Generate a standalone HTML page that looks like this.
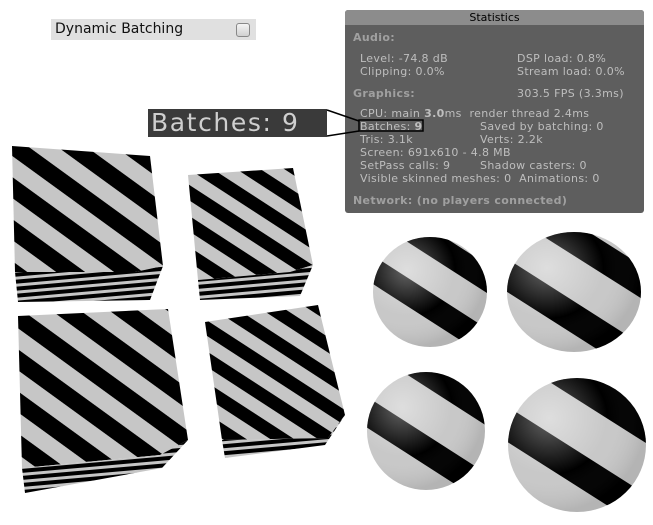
<!DOCTYPE html>
<html><head><meta charset="utf-8"><style>
html,body{margin:0;padding:0;background:#fff;width:653px;height:525px;overflow:hidden;position:relative;font-family:"DejaVu Sans","Liberation Sans",sans-serif}
.db{position:absolute;left:51px;top:19px;width:205px;height:21px;background:#e0e0e0}
.db span{position:absolute;left:4px;top:2px;font-size:14px;color:#111}
.cb{position:absolute;left:185px;top:4px;width:12px;height:12px;border:1px solid #888;border-radius:3px;background:linear-gradient(#f4f4f4,#d0d0d0)}
.panel{position:absolute;left:345px;top:10px;width:299px;height:203px;background:#5e5e5e;border-radius:3px;overflow:hidden}
.hdr{height:15px;background:#8c8c8c;text-align:center;font-size:11px;line-height:15px;color:#000}
.t{position:absolute;font-size:11px;color:#bebebe;white-space:nowrap;line-height:13px;letter-spacing:0.35px}
.h{color:#a0a0a0;font-weight:bold}
.big{position:absolute;left:148px;top:109px;width:179px;height:28px;background:#3a3a3a;color:#cfcfcf;font-size:25px;line-height:28px;padding-left:3px;box-sizing:border-box;letter-spacing:1.6px;white-space:nowrap;overflow:hidden}
svg{position:absolute;left:0;top:0}
</style></head><body>
<svg width="653" height="525" viewBox="0 0 653 525">
<defs>
<pattern id="s1" width="34" height="34" patternUnits="userSpaceOnUse" patternTransform="rotate(36)"><rect width="34" height="34" fill="#c6c6c6"/><rect width="34" height="17" fill="#000"/></pattern>
<pattern id="s2" width="26" height="26" patternUnits="userSpaceOnUse" patternTransform="rotate(33)"><rect width="26" height="26" fill="#c6c6c6"/><rect width="26" height="13" fill="#000"/></pattern>
<pattern id="h1" width="60" height="7" patternUnits="userSpaceOnUse" patternTransform="rotate(-5)"><rect width="60" height="7" fill="#c6c6c6"/><rect width="60" height="4" fill="#000"/></pattern>
<radialGradient id="hl" cx="0.3" cy="0.3" r="0.7"><stop offset="0" stop-color="#fff" stop-opacity="0.4"/><stop offset="0.6" stop-color="#fff" stop-opacity="0"/><stop offset="1" stop-color="#000" stop-opacity="0.1"/></radialGradient>
<clipPath id="c1"><ellipse cx="430" cy="292" rx="57" ry="55"/></clipPath>
<clipPath id="c2"><ellipse cx="574" cy="292" rx="67" ry="60"/></clipPath>
<clipPath id="c3"><ellipse cx="426" cy="431" rx="59" ry="59"/></clipPath>
<clipPath id="c4"><ellipse cx="577" cy="445" rx="69" ry="67"/></clipPath>
</defs>
<polygon points="12,146 150,156 163,266 135,272 15,272" fill="url(#s1)"/>
<polygon points="15,272 135,272 163,266 150,300 18,302" fill="url(#h1)"/>
<polygon points="188,175 293,168 313,265 290,272 198,280" fill="url(#s2)"/>
<polygon points="198,280 290,272 313,265 300,296 200,300" fill="url(#h1)"/>
<polygon points="18,316 168,309 188,440 160,455 22,468" fill="url(#s1)"/>
<polygon points="22,468 160,455 188,440 162,468 25,493" fill="url(#h1)"/>
<polygon points="205,322 318,305 345,415 328,438 222,440" fill="url(#s2)"/>
<polygon points="222,440 328,438 345,415 325,445 225,458" fill="url(#h1)"/>
<g clip-path="url(#c1)"><rect x="360" y="230" width="140" height="130" fill="#c8c8c8"/>
<g stroke="#000" stroke-width="24"><line x1="380" y1="210" x2="520" y2="300"/><line x1="350" y1="255" x2="490" y2="345"/><line x1="350" y1="325" x2="490" y2="415"/></g>
<ellipse cx="430" cy="292" rx="57" ry="55" fill="url(#hl)"/></g>
<g clip-path="url(#c2)"><rect x="500" y="225" width="150" height="135" fill="#c8c8c8"/>
<g stroke="#000" stroke-width="28"><line x1="520" y1="205" x2="670" y2="300"/><line x1="480" y1="258" x2="640" y2="360"/><line x1="480" y1="335" x2="640" y2="437"/></g>
<ellipse cx="574" cy="292" rx="67" ry="60" fill="url(#hl)"/></g>
<g clip-path="url(#c3)"><rect x="360" y="365" width="135" height="130" fill="#c8c8c8"/>
<g stroke="#000" stroke-width="26"><line x1="385" y1="345" x2="525" y2="435"/><line x1="345" y1="398" x2="485" y2="488"/></g>
<ellipse cx="426" cy="431" rx="59" ry="59" fill="url(#hl)"/></g>
<g clip-path="url(#c4)"><rect x="500" y="370" width="155" height="150" fill="#c8c8c8"/>
<g stroke="#000" stroke-width="30"><line x1="535" y1="355" x2="685" y2="450"/><line x1="485" y1="410" x2="655" y2="518"/></g>
<ellipse cx="577" cy="445" rx="69" ry="67" fill="url(#hl)"/></g>
</svg>
<div class="db"><span>Dynamic Batching</span><div class="cb"></div></div>
<div class="panel"><div class="hdr">Statistics</div>
<div class="t h" style="left:8px;top:21px">Audio:</div>
<div class="t" style="left:15px;top:42px">Level: -74.8 dB</div>
<div class="t" style="left:172px;top:42px">DSP load: 0.8%</div>
<div class="t" style="left:15px;top:55px">Clipping: 0.0%</div>
<div class="t" style="left:172px;top:55px">Stream load: 0.0%</div>
<div class="t h" style="left:8px;top:77px">Graphics:</div>
<div class="t" style="left:172px;top:77px">303.5 FPS (3.3ms)</div>
<div class="t" style="left:15px;top:97px">CPU: main <b>3.0</b>ms&nbsp; render thread 2.4ms</div>
<div class="t" style="left:15px;top:110px">Batches: <b>9</b></div>
<div class="t" style="left:135px;top:110px">Saved by batching: 0</div>
<div class="t" style="left:15px;top:123px">Tris: 3.1k</div>
<div class="t" style="left:135px;top:123px">Verts: 2.2k</div>
<div class="t" style="left:15px;top:136px">Screen: 691x610 - 4.8 MB</div>
<div class="t" style="left:15px;top:149px">SetPass calls: 9</div>
<div class="t" style="left:135px;top:149px">Shadow casters: 0</div>
<div class="t" style="left:15px;top:162px">Visible skinned meshes: 0&nbsp; Animations: 0</div>
<div class="t h" style="left:8px;top:184px">Network: (no players connected)</div>
</div>
<div class="big">Batches: 9</div>
<svg width="653" height="525" viewBox="0 0 653 525" style="pointer-events:none">
<line x1="327" y1="110" x2="359" y2="121" stroke="#000" stroke-width="1.5"/>
<line x1="327" y1="136" x2="359" y2="131" stroke="#000" stroke-width="1.5"/>
<rect x="359" y="120" width="64" height="11" fill="none" stroke="#000" stroke-width="1.5"/>
</svg>
</body></html>
